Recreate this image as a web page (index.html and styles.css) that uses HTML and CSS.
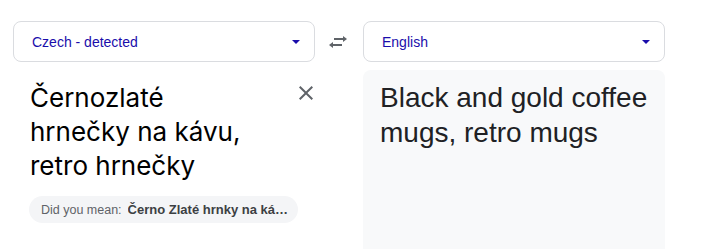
FILE: index.html
```html
<!DOCTYPE html>
<html lang="cs">
<head>
    <meta charset="UTF-8" />
    <meta name="viewport" content="width=device-width, initial-scale=1.0" />
    <title>Překlad</title>
    <link rel="stylesheet" href="styles.css">
</head>
<body>
    <div class="translator">
        <div class="pane">
            <div class="lang-select">
                <span class="lang-name">Czech - detected</span>
                <span class="caret"></span>
            </div>
            <div class="source-body">
                <div class="source-text">Černozlaté<br>hrnečky na kávu,<br>retro hrnečky</div>
                <button class="clear-btn" aria-label="Clear source text">
                    <svg width="24" height="24" viewBox="0 0 24 24"><path d="M19 6.41L17.59 5 12 10.59 6.41 5 5 6.41 10.59 12 5 17.59 6.41 19 12 13.41 17.59 19 19 17.59 13.41 12z" fill="#5f6368"/></svg>
                </button>
            </div>
            <div class="suggest">
                <span class="suggest-label">Did you mean:</span>
                <b class="suggest-text">Černo Zlaté hrnky na kávu, retro hrnky</b>
            </div>
        </div>

        <div class="swap" aria-label="Swap languages">
            <svg width="20" height="12" viewBox="0 0 20 12">
                <rect x="6" y="2" width="9.5" height="2" fill="#5f6368"/>
                <polygon points="15,0 19,3 15,6" fill="#5f6368"/>
                <rect x="4.5" y="8" width="9.5" height="2" fill="#5f6368"/>
                <polygon points="5,6 1,9 5,12" fill="#5f6368"/>
            </svg>
        </div>

        <div class="pane">
            <div class="lang-select">
                <span class="lang-name">English</span>
                <span class="caret"></span>
            </div>
            <div class="target-body">Black and gold coffee mugs, retro mugs</div>
        </div>
    </div>
</body>
</html>
```

FILE: styles.css
```css
html,
body {
    margin: 0;
    padding: 0;
    background-color: #fff;
    overflow: hidden;
}
.translator {
    display: grid;
    grid-template-columns: 302px 48px 302px;
    padding: 21px 13px 0;
    font-family: "Liberation Sans", Arial, sans-serif;
}
.lang-select {
    display: flex;
    align-items: center;
    justify-content: space-between;
    box-sizing: border-box;
    height: 41px;
    padding: 0 14px 0 18px;
    border: 1px solid #dadce0;
    border-radius: 8px;
    font-size: 14px;
    color: #1a0dab;
}
.lang-select .caret {
    width: 0;
    height: 0;
    border-left: 4px solid transparent;
    border-right: 4px solid transparent;
    border-top: 4px solid #1a0dab;
    margin-top: 1px;
}

.source-body {display:flex;align-items:flex-start;margin-top:8px;padding:11px 0 0 17px;}
.source-text {flex:1;font-family:Inter, sans-serif;font-size:26px;line-height:34px;color:#000;}
.clear-btn {width:24px;height:24px;padding:0;margin-right:-3px;border:0;background:none;}
.clear-btn svg {display:block;}

.suggest {display:flex;align-items:center;box-sizing:border-box;width:269px;height:27px;margin:13px 0 0 16px;padding:0 10px 0 12px;border-radius:14px;background-color:#f4f5f7;font-size:12.5px;white-space:nowrap;}
.suggest-label {color:#5f6368;}
.suggest-text {margin-left:6px;overflow:hidden;text-overflow:ellipsis;font-size:13px;color:#3c4043;}

.swap {display:flex;justify-content:center;padding-top:15px;}
.swap svg {display:block;margin-left:-2px;}

.target-body {box-sizing:border-box;height:200px;margin-top:8px;padding:10px 17px 0;border-radius:8px;background-color:#f8f9fa;font-size:28px;line-height:35px;color:#202124;}
```
